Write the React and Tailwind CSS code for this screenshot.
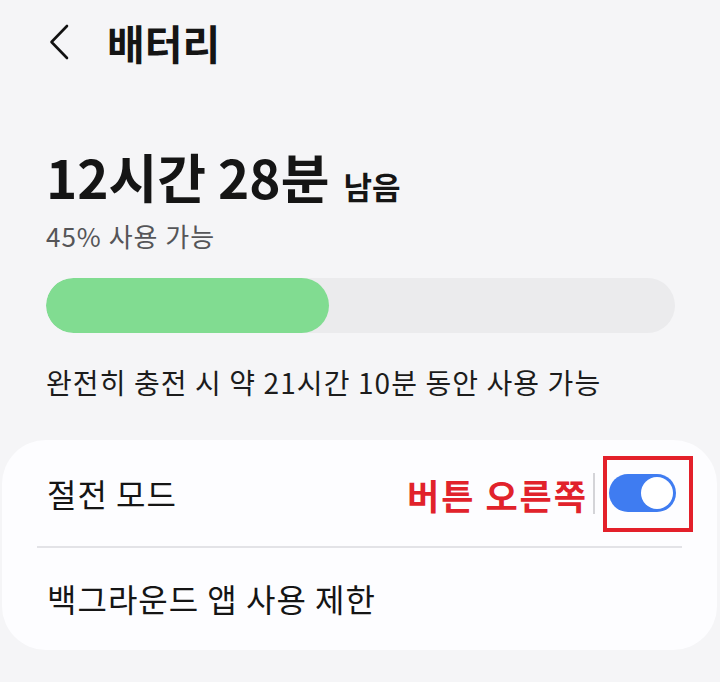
import React from "react";

export default function App() {
  return (
    <div
      className="w-[720px] h-[682px] bg-[#f5f5f7] overflow-hidden text-[#151515]"
      style={{ fontFamily: '"Noto Sans CJK KR", "Noto Sans", sans-serif' }}
    >
      {/* header */}
      <div className="h-[84px] flex items-center pl-[49px]">
        <svg width="20" height="36" viewBox="0 0 20 36" className="shrink-0">
          <path d="M18 2 L2.5 18 L18 34" fill="none" stroke="#111" strokeWidth="2.6" strokeLinecap="round" strokeLinejoin="round" />
        </svg>
        <div className="ml-[38px] text-[41px] font-bold leading-[48px]">배터리</div>
      </div>

      <div className="pl-[46px] pr-[45px]">
        <div className="mt-[61px] h-[62px] flex items-baseline leading-[62px]">
          <span className="text-[53px] font-bold tracking-[0px]">12시간 28분</span>
          <span className="ml-[14px] text-[31px] font-bold">남음</span>
        </div>
        <div className="mt-[14px] h-[30px] leading-[30px] text-[26px] tracking-[1px] text-[#555558]">45% 사용 가능</div>
        <div className="mt-[27px] h-[55px] rounded-full bg-[#ebebed] overflow-hidden">
          <div className="h-full rounded-full bg-[#81dc91]" style={{ width: "45%" }} />
        </div>
        <div className="mt-[33px] h-[32px] leading-[32px] text-[28px] tracking-[1.1px] text-[#1c1c1c]">
          완전히 충전 시 약 21시간 10분 동안 사용 가능
        </div>
      </div>

      {/* card */}
      <div className="mt-[42px] ml-[2px] mr-[3px] h-[210px] rounded-[44px] bg-[#fdfdff] flex flex-col">
        <div className="h-[106px] flex items-center pl-[45px] pr-[41px] justify-between">
          <div className="text-[32px] leading-[36px] tracking-[1px]">절전 모드</div>
          <div className="flex items-center">
            <div className="text-[35px] font-bold text-[#e1222b] leading-[40px] mt-[4px] tracking-[2px]">버튼 오른쪽</div>
            <div className="ml-[5px] w-[2px] h-[41px] bg-[#d4d4d8]" />
            <div className="relative ml-[14px]">
              <div className="w-[67px] h-[38px] rounded-full bg-[#3f7cf1] flex items-center justify-end pr-[3px]">
                <div className="w-[32px] h-[32px] rounded-full bg-white" />
              </div>
              <div className="absolute left-[-6px] top-[-18px] w-[90px] h-[76px] border-[4px] border-[#e3202a]" />
            </div>
          </div>
        </div>
        <div className="mx-[35px] h-[2px] bg-[#e3e3e7]" />
        <div className="flex-1 flex items-center pl-[45px]">
          <div className="text-[32px] leading-[36px] mt-[-2px] tracking-[1px]">백그라운드 앱 사용 제한</div>
        </div>
      </div>
    </div>
  );
}
